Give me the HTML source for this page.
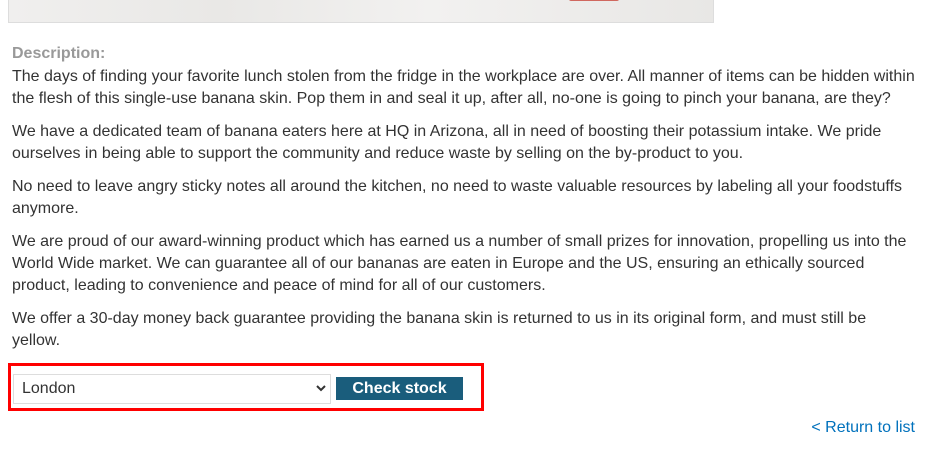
<!DOCTYPE html>
<html><head><style>
body{margin:0;background:#fff;font-family:"Liberation Sans",sans-serif;color:#333;font-size:16px;}
.img{position:absolute;left:8px;top:-2px;width:704px;height:23px;border:1px solid #ddd;background:linear-gradient(90deg,#f0efee,#e9e8e6 30%,#f2f1f0 60%,#e8e7e5);}
.blob{position:absolute;left:560px;top:0;width:50px;height:2px;background:#d0685f;border-radius:0 0 20px 20px;}
.desc{position:absolute;left:12px;top:41px;width:905px;line-height:22px;}
.desc h4{margin:0;color:#999;font-size:16px;font-weight:bold;line-height:24px;padding-top:1px;}
.desc p{margin:0 0 11px 0;}
.box{position:absolute;left:8px;top:363px;width:470px;height:42px;border:3px solid #f00;}
.sel{position:absolute;left:13px;top:374px;width:316px;height:28px;border:1px solid #ddd;background:#fff;}
.sel span{position:absolute;left:8px;top:5px;}
.sel svg{position:absolute;right:4px;top:10px;}
.btn{position:absolute;left:336px;top:377px;width:127px;height:23px;background:#1a5d7c;color:#fff;font-weight:bold;font-size:16px;text-align:center;line-height:23px;}
.ret{position:absolute;right:14px;top:419px;color:#0071bc;}
</style></head><body>
<div class="img"><div class="blob"></div></div>
<div class="desc"><h4>Description:</h4>
<p>The days of finding your favorite lunch stolen from the fridge in the workplace are over. All manner of items can be hidden within the flesh of this single-use banana skin. Pop them in and seal it up, after all, no-one is going to pinch your banana, are they?</p>
<p>We have a dedicated team of banana eaters here at HQ in Arizona, all in need of boosting their potassium intake. We pride ourselves in being able to support the community and reduce waste by selling on the by-product to you.</p>
<p>No need to leave angry sticky notes all around the kitchen, no need to waste valuable resources by labeling all your foodstuffs anymore.</p>
<p>We are proud of our award-winning product which has earned us a number of small prizes for innovation, propelling us into the World Wide market. We can guarantee all of our bananas are eaten in Europe and the US, ensuring an ethically sourced product, leading to convenience and peace of mind for all of our customers.</p>
<p>We offer a 30-day money back guarantee providing the banana skin is returned to us in its original form, and must still be yellow.</p>
</div>
<div class="box"></div>
<div class="sel"><span>London</span><svg width="10" height="7" viewBox="0 0 10 7"><path d="M1 1L5 5L9 1" stroke="#333" stroke-width="2" fill="none"/></svg></div>
<div class="btn">Check stock</div>
<div class="ret">&lt; Return to list</div>
</body></html>
